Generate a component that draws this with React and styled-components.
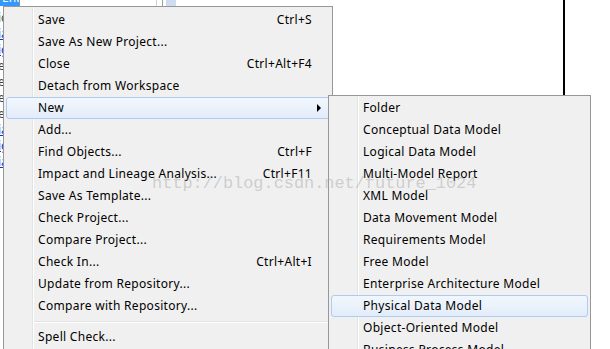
import React from "react";
import styled, { createGlobalStyle } from "styled-components";

const GlobalStyle = createGlobalStyle`
  html, body { margin: 0; padding: 0; background: #fff; }
  body { font-family: "Noto Sans", "Liberation Sans", sans-serif; }
  * { box-sizing: border-box; }
`;

const Screen = styled.div`
  position: relative;
  width: 610px;
  height: 349px;
  overflow: hidden;
  background: #fff;
`;

const Desktop = styled.div`
  display: flex;
  height: 100%;
`;

const TreePanel = styled.div`
  width: 156px;
  display: flex;
  flex-direction: column;
  font-size: 12px;
  line-height: 16px;
  background: #fff;
`;

const SelectedNode = styled.div`
  width: 20px;
  height: 16px;
  margin-top: -10px;
  margin-bottom: 4px;
  background: #3399ff;
  color: #fff;
  border-right: 1px dotted #e08020;
  white-space: nowrap;
  overflow: hidden;
  padding-left: 2px;
`;

const TreeItem = styled.div`
  height: 16px;
  white-space: nowrap;
  margin-left: -2px;
  color: ${(p) => (p.$link ? "#1030e0" : "#444")};
  text-decoration: ${(p) => (p.$link ? "underline" : "none")};
`;

const Splitter = styled.div`
  width: 7px;
  border-left: 1px solid #d4d4d4;
  border-right: 1px solid #a0a0a0;
  margin-right: 3px;
  background: #fff;
`;

const ScrollTrack = styled.div`
  width: 10px;
  background: #cfdcf0;
`;

const Canvas = styled.div`
  flex: 1;
  display: flex;
  background: #fff;
`;

const CanvasSpace = styled.div`
  width: ${(p) => p.$w}px;
`;

const CanvasLine = styled.div`
  width: 2px;
  background: #000;
`;

const Menu = styled.div`
  position: absolute;
  left: ${(p) => p.$left}px;
  top: ${(p) => p.$top}px;
  width: ${(p) => p.$width}px;
  border: 1px solid #979797;
  padding: ${(p) => p.$padTop}px 2px 2px 2px;
  background: linear-gradient(
      to right,
      transparent 28px,
      #e2e3e3 28px,
      #e2e3e3 29px,
      #ffffff 29px,
      #ffffff 30px,
      transparent 30px
    ),
    #f0f0f0;
  font-family: "Noto Sans", "Liberation Sans", sans-serif;
  font-size: 12px;
  letter-spacing: 0.3px;
  color: #000;
`;

const Item = styled.div`
  display: flex;
  align-items: center;
  height: 22px;
  padding-left: 31px;
  padding-bottom: 2px;
  border: 1px solid ${(p) => (p.$active ? "#aeccf3" : "transparent")};
  border-radius: 3px;
  background: ${(p) =>
    p.$active ? "linear-gradient(#f2f7fd, #e2ecf9)" : "transparent"};
  white-space: nowrap;
`;

const Label = styled.span`
  flex: 1;
`;

const Shortcut = styled.span`
  text-align: right;
`;

const ArrowCell = styled.span`
  width: 17px;
  display: flex;
  align-items: center;
  padding-left: 5px;
  padding-top: 2px;
`;

const Arrow = styled.span`
  width: 0;
  height: 0;
  border-top: 4px solid transparent;
  border-bottom: 4px solid transparent;
  border-left: 4px solid #000;
`;

const Separator = styled.div`
  height: 9px;
  margin-left: 28px;
  padding-top: 4px;
  &::before {
    content: "";
    display: block;
    height: 1px;
    background: #e2e3e3;
    border-bottom: 1px solid #fff;
    box-sizing: content-box;
  }
`;

const Watermark = styled.div`
  position: absolute;
  left: 152px;
  top: 174px;
  font-family: "Liberation Mono", monospace;
  font-size: 16.9px;
  line-height: 20px;
  color: rgba(150, 150, 150, 0.4);
  white-space: nowrap;
  pointer-events: none;
`;

const mainItems = [
  { label: "Save", shortcut: "Ctrl+S" },
  { label: "Save As New Project..." },
  { label: "Close", shortcut: "Ctrl+Alt+F4" },
  { label: "Detach from Workspace" },
  { label: "New", sub: true, active: true },
  { label: "Add..." },
  { label: "Find Objects...", shortcut: "Ctrl+F" },
  { label: "Impact and Lineage Analysis...", shortcut: "Ctrl+F11" },
  { label: "Save As Template..." },
  { label: "Check Project..." },
  { label: "Compare Project..." },
  { label: "Check In...", shortcut: "Ctrl+Alt+I" },
  { label: "Update from Repository..." },
  { label: "Compare with Repository..." },
  { sep: true },
  { label: "Spell Check..." },
];

const subItems = [
  "Folder",
  "Conceptual Data Model",
  "Logical Data Model",
  "Multi-Model Report",
  "XML Model",
  "Data Movement Model",
  "Requirements Model",
  "Free Model",
  "Enterprise Architecture Model",
  "Physical Data Model",
  "Object-Oriented Model",
  "Business Process Model",
];

const treeItems = [
  { t: "ic", link: false },
  { t: "ia", link: true },
  { t: "ig", link: true },
  { t: "ee", link: false },
  { t: "ee", link: false },
  { t: "ee", link: false },
  { t: "ee", link: false },
  { t: "ia", link: true },
  { t: "ig", link: true },
  { t: "ia", link: true },
];

export default function App() {
  return (
    <>
      <GlobalStyle />
      <Screen>
        <Desktop>
          <TreePanel>
            <SelectedNode>Entity_1</SelectedNode>
            {treeItems.map((it, i) => (
              <TreeItem key={i} $link={it.link}>
                {it.t}
              </TreeItem>
            ))}
          </TreePanel>
          <Splitter />
          <ScrollTrack />
          <Canvas>
            <CanvasSpace $w={387} />
            <CanvasLine />
          </Canvas>
        </Desktop>

        <Menu $left={3} $top={6} $width={330} $padTop={2}>
          {mainItems.map((it, i) =>
            it.sep ? (
              <Separator key={i} />
            ) : (
              <Item key={i} $active={it.active}>
                <Label>{it.label}</Label>
                {it.shortcut && <Shortcut>{it.shortcut}</Shortcut>}
                <ArrowCell>{it.sub && <Arrow />}</ArrowCell>
              </Item>
            )
          )}
        </Menu>

        <Menu $left={328} $top={95} $width={263} $padTop={1}>
          {subItems.map((label) => (
            <Item key={label} $active={label === "Physical Data Model"}>
              <Label>{label}</Label>
            </Item>
          ))}
        </Menu>

        <Watermark>http://blog.csdn.net/future_1024</Watermark>
      </Screen>
    </>
  );
}
